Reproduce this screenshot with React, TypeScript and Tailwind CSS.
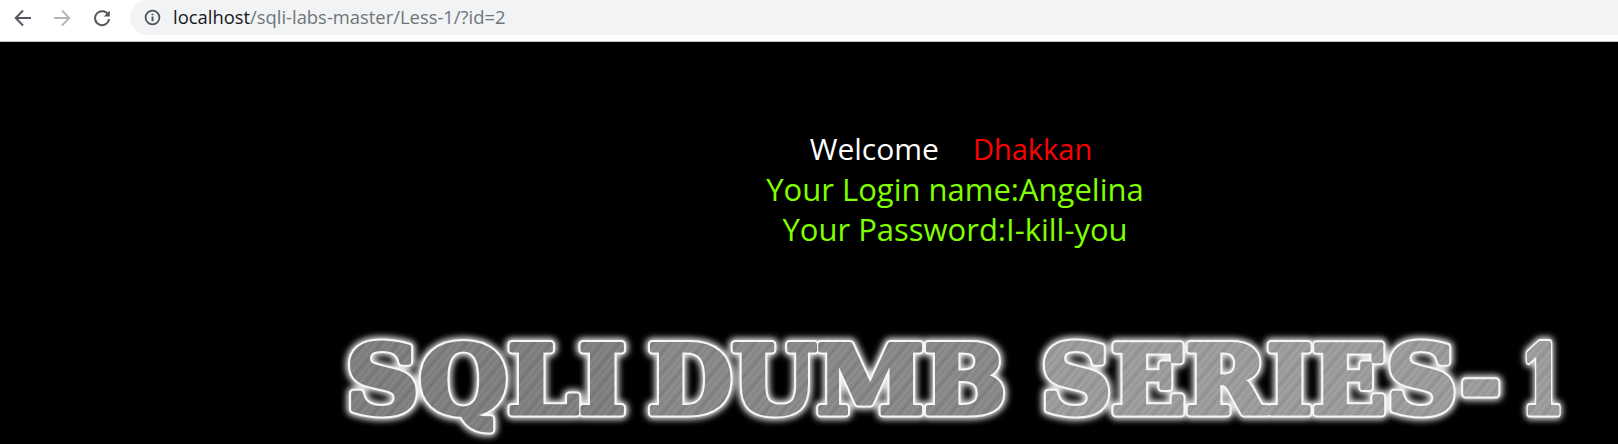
import { useId } from 'react';

function BrowserBar() {
  return (
    <div className="flex h-[42px] items-start border-b border-[#c4c4c4] bg-white">
      <div className="flex h-[35px] w-[130px] shrink-0 items-center text-[#55595d]">
        <svg className="ml-[14px]" width="18" height="18" viewBox="0 0 18 18" fill="none" stroke="currentColor" strokeWidth="2">
          <path d="M17 9H2M9 1.5 1.7 9 9 16.5" />
        </svg>
        <svg className="ml-[21px] text-[#b4b6b9]" width="18" height="18" viewBox="0 0 18 18" fill="none" stroke="currentColor" strokeWidth="1.9">
          <path d="M1 9h15M9 1.5 16.3 9 9 16.5" />
        </svg>
        <svg className="ml-[22px]" width="18" height="18" viewBox="0 0 18 18" fill="none" stroke="currentColor" strokeWidth="2">
          <path d="M15.4 6.2A7 7 0 1 0 16 10" />
          <path d="M16.8 1.5v6h-6z" fill="currentColor" stroke="none" />
        </svg>
      </div>
      <div className="flex h-[35px] flex-1 items-center rounded-l-[18px] bg-[#f1f3f4] pl-[14px]">
        <svg width="17" height="17" viewBox="0 0 17 17" fill="none" className="text-[#4f5256]">
          <circle cx="8.5" cy="8.5" r="6.9" stroke="currentColor" strokeWidth="1.8" />
          <path d="M8.5 7.6v4.6M8.5 4.7v1.6" stroke="currentColor" strokeWidth="1.9" />
        </svg>
        <span className="ml-[12px] text-[18.4px] leading-none text-[#70757a] [font-family:'Open_Sans','Noto_Sans',sans-serif]">
          <span className="text-[#15171a]">localhost</span>/sqli-labs-master/Less-1/?id=2
        </span>
      </div>
    </div>
  );
}

function Logo() {
  const id = useId().replace(/:/g, '');
  const tones = [
    { key: 'a', base: '#7e7e7e', light: '#8b8b8b', dark: '#727272' },
    { key: 'b', base: '#878787', light: '#949494', dark: '#7a7a7a' },
    { key: 'c', base: '#9a9a9a', light: '#a8a8a8', dark: '#8e8e8e' },
  ];
  const words = [
    { label: 'SQLI', x: 346, width: 280, tone: 'a' },
    { label: 'DUMB', x: 648, width: 358, tone: 'b' },
    { label: 'SERIES-', x: 1041, width: 460, tone: 'c' },
    { label: '1', x: 1521, width: 43, tone: 'c' },
  ];

  return (
    <svg className="block" width="1618" height="122" viewBox="0 322 1618 122">
      <defs>
        {tones.map((t) => (
          <pattern key={t.key} id={`${id}${t.key}`} width="13" height="13" patternUnits="userSpaceOnUse" patternTransform="rotate(-50)">
            <rect width="13" height="13" fill={t.base} />
            <rect y="1" width="13" height="1" fill={t.light} />
            <rect y="5" width="13" height="1.5" fill={t.dark} />
            <rect y="9" width="13" height="1" fill={t.light} />
          </pattern>
        ))}
        <filter id={`${id}g`} x="-15%" y="-40%" width="130%" height="180%">
          <feGaussianBlur stdDeviation="3" />
        </filter>
        <filter id={`${id}s`} x="-5%" y="-10%" width="110%" height="120%">
          <feGaussianBlur stdDeviation="0.5" />
        </filter>
      </defs>
      {words.map((w) => (
        <g key={w.label} fontFamily="'DejaVu Serif', serif" fontWeight="700" fontSize="94" strokeLinejoin="round">
          <text x={w.x} y="413" textLength={w.width} lengthAdjust="spacingAndGlyphs" fill="#e6e6e6" stroke="#e6e6e6" strokeWidth="13" filter={`url(#${id}g)`}>
            {w.label}
          </text>
          <text x={w.x} y="413" textLength={w.width} lengthAdjust="spacingAndGlyphs" fill="#f6f6f6" stroke="#f6f6f6" strokeWidth="9" filter={`url(#${id}s)`}>
            {w.label}
          </text>
          <text x={w.x} y="413" textLength={w.width} lengthAdjust="spacingAndGlyphs" fill={`url(#${id}${w.tone})`} stroke={`url(#${id}${w.tone})`} strokeWidth="5" filter={`url(#${id}s)`}>
            {w.label}
          </text>
        </g>
      ))}
    </svg>
  );
}

export default function App() {
  return (
    <div className="h-[444px] w-[1618px] overflow-hidden bg-black">
      <BrowserBar />
      <div className="pl-[292px] pt-[87px] text-center text-[31px] leading-[40px] text-[#7fff00] [font-family:'Open_Sans','Noto_Sans',sans-serif]">
        <div className="pr-[8px] text-[30px] text-white">
          Welcome<span className="ml-[34px] text-[29px] text-[#ff0000]">Dhakkan</span>
        </div>
        <div>Your Login name:Angelina</div>
        <div>Your Password:I-kill-you</div>
      </div>
      <div className="mt-[73px]">
        <Logo />
      </div>
    </div>
  );
}
